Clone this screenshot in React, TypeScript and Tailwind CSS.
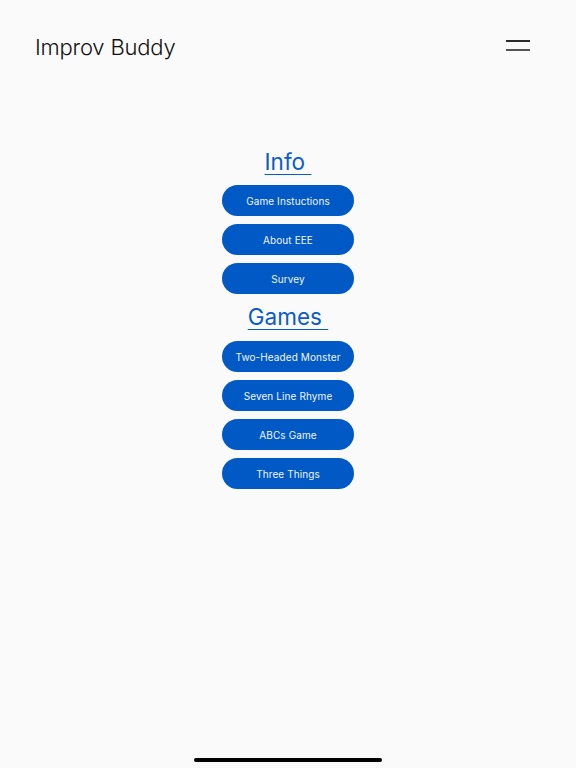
import React from "react";

const infoLinks = ["Game Instuctions", "About EEE", "Survey"];
const gameLinks = ["Two-Headed Monster", "Seven Line Rhyme", "ABCs Game", "Three Things"];

const PillButton = ({ label }: { label: string }) => (
  <button className="w-[132px] h-[31px] rounded-full bg-[#0059c5] text-[#f2f6fc] text-[10px] leading-none tracking-[0.1px]">
    {label}
  </button>
);

const SectionHeading = ({ title }: { title: string }) => (
  <h2 className="text-[22.5px] leading-[28px] text-[#0a5cc8] underline decoration-1 underline-offset-[4px] whitespace-pre">
    {title + " "}
  </h2>
);

export default function App() {
  return (
    <div
      className="w-[576px] h-[768px] bg-[#fafafa] flex flex-col"
      style={{ fontFamily: "Inter, 'Liberation Sans', sans-serif" }}
    >
      <header className="flex items-center justify-between pl-[35px] pr-[46px] pt-[32px]">
        <h1 className="text-[22px] leading-[30px] font-light text-[#111] tracking-[-0.2px]">
          Improv Buddy
        </h1>
        <button className="flex flex-col gap-[7px] w-[24px] -mt-[4px]">
          <span className="block h-[2px] w-full bg-[#2a2a2a]" />
          <span className="block h-[2px] w-full bg-[#555]" />
        </button>
      </header>

      <main className="flex flex-col items-center pt-[86px]">
        <SectionHeading title="Info" />
        <div className="flex flex-col gap-[8px] mt-[9px]">
          {infoLinks.map((l) => (
            <PillButton key={l} label={l} />
          ))}
        </div>
        <div className="mt-[9px]">
          <SectionHeading title="Games" />
        </div>
        <div className="flex flex-col gap-[8px] mt-[10px]">
          {gameLinks.map((l) => (
            <PillButton key={l} label={l} />
          ))}
        </div>
      </main>

      <div className="mt-auto mb-[6px] flex justify-center">
        <div className="w-[188px] h-[4px] rounded-full bg-black" />
      </div>
    </div>
  );
}
